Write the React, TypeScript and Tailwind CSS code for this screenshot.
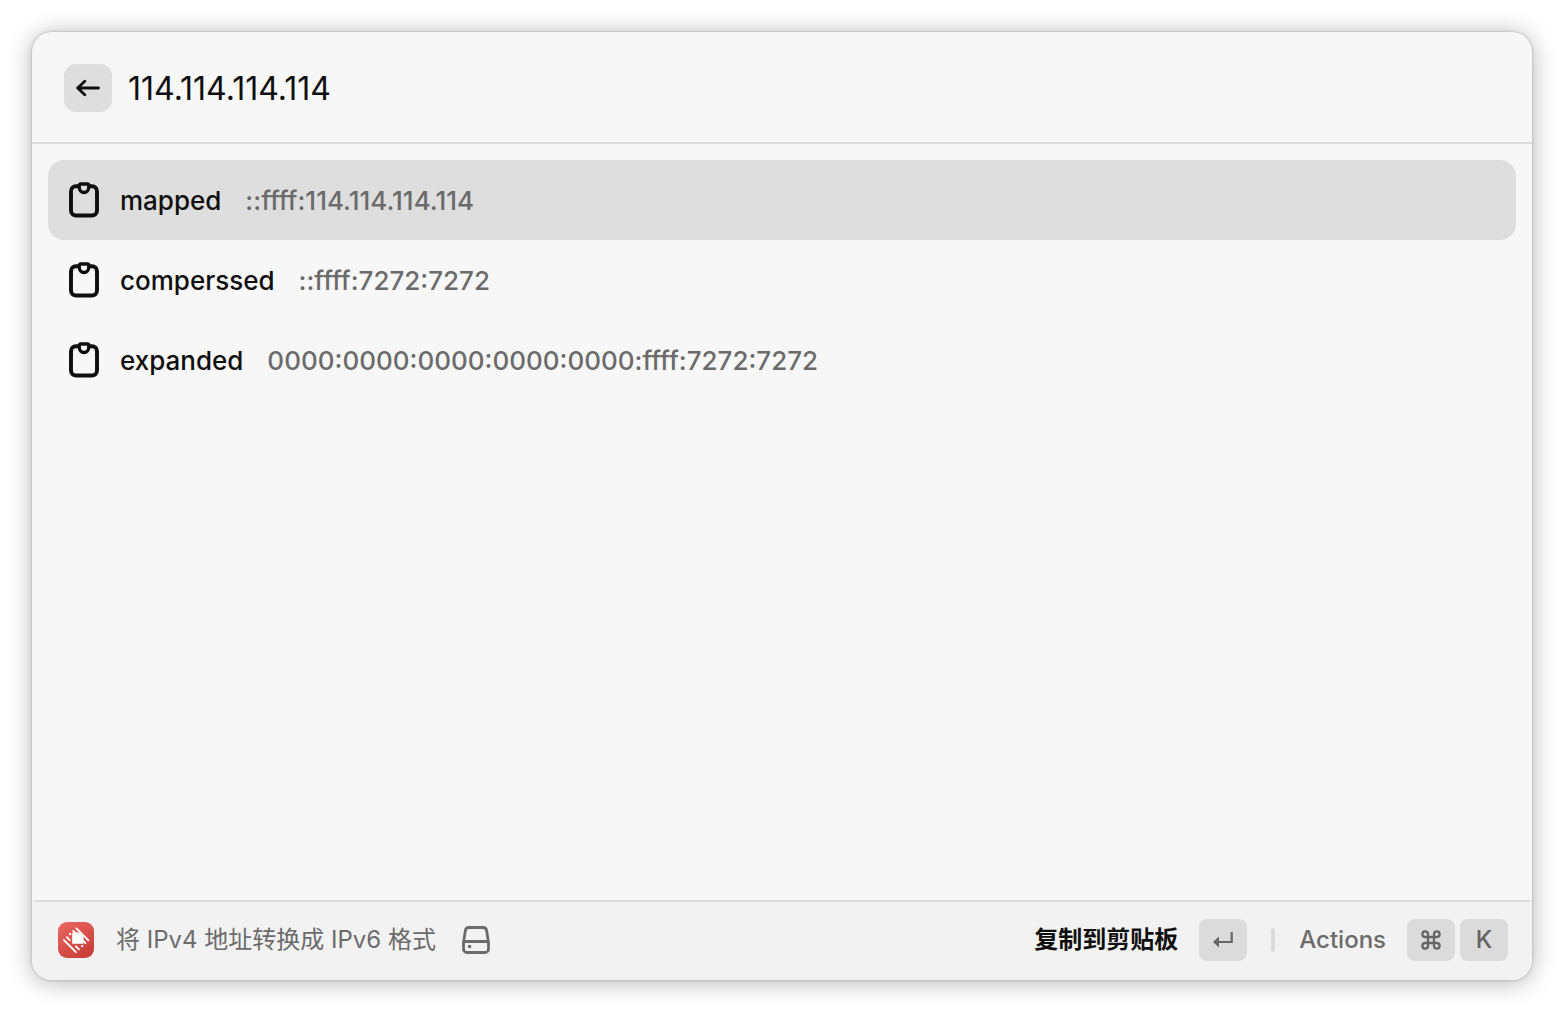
import { useState } from 'react';

const results = [
  { title: 'mapped', value: '::ffff:114.114.114.114' },
  { title: 'comperssed', value: '::ffff:7272:7272' },
  { title: 'expanded', value: '0000:0000:0000:0000:0000:ffff:7272:7272' },
];

function ArrowLeftIcon() {
  return (
    <svg width="24" height="24" viewBox="0 0 24 24" fill="none" stroke="currentColor" strokeWidth="2.9" strokeLinecap="round" strokeLinejoin="round" aria-hidden="true">
      <path d="M22.5 12H1.7M8.8 5.2L1.7 12l7.1 6.8" />
    </svg>
  );
}

function ClipboardIcon() {
  return (
    <svg width="32" height="36" viewBox="0 0 32 36" fill="none" stroke="currentColor" strokeWidth="3.9" strokeLinejoin="round" aria-hidden="true">
      <path d="M11 4.200H8A5 5 0 0 0 3 9.200V28.500A5 5 0 0 0 8 33.500H24A5 5 0 0 0 29 28.500V9.200A5 5 0 0 0 24 4.200H21" />
      <path d="M12.500 2H19.500A1.200 1.200 0 0 1 20.700 3.200V5.800A4.700 4.700 0 0 1 11.300 5.800V3.200A1.200 1.200 0 0 1 12.500 2Z" strokeWidth="3.300" />
    </svg>
  );
}

function ExtensionLogo() {
  return (
    <svg width="36" height="36" viewBox="0 0 36 36" fill="none" aria-hidden="true">
      <defs>
        <linearGradient id="logo-bg" x1="6" y1="0" x2="30" y2="36" gradientUnits="userSpaceOnUse">
          <stop stopColor="#e8655f" />
          <stop offset="1" stopColor="#c93b37" />
        </linearGradient>
      </defs>
      <rect width="36" height="36" rx="9" fill="url(#logo-bg)" />
      <path d="M14.200 10.500H21.500L25.500 14.500V21.800H14.200Z" fill="#fff" />
      <g stroke="#fff" strokeWidth="1.900" strokeLinecap="round">
        <path d="M18.400 6.300L30.400 18.300M5.900 18.200L17.900 30.200M15.300 8.900L18 11.600M24.800 18.400L27.500 21.100M8.800 15.200L11.800 18.200M17.900 24.300L20.900 27.300" />
        <path d="M12.100 12L12.200 12.100M24.100 24L24.200 24.100" strokeWidth="2.200" />
      </g>
    </svg>
  );
}

function DriveIcon() {
  return (
    <svg width="28" height="28" viewBox="0 0 28 28" fill="none" stroke="currentColor" strokeWidth="2.800" strokeLinecap="round" strokeLinejoin="round" aria-hidden="true">
      <path d="M1.500 16.500L3.400 4.500A3.600 3.600 0 0 1 7 1.500H21A3.600 3.600 0 0 1 24.600 4.500L26.500 16.500V22.900A3.600 3.600 0 0 1 22.900 26.500H5.100A3.600 3.600 0 0 1 1.500 22.900ZM1.800 15.500H26.200" />
      <circle cx="7.600" cy="20.500" r="1.800" fill="currentColor" stroke="none" />
    </svg>
  );
}

function ReturnIcon() {
  return (
    <svg width="20" height="16" viewBox="0 0 20 16" fill="none" aria-hidden="true">
      <path d="M18.700 0V10H5" stroke="currentColor" strokeWidth="2.200" />
      <path d="M0 10L6 4.500V15.500Z" fill="currentColor" />
    </svg>
  );
}

function CommandIcon() {
  return (
    <svg width="20" height="20" viewBox="0 0 20 20" fill="none" stroke="currentColor" strokeWidth="2.300" aria-hidden="true">
      <path d="M7 7H13V13H7ZM7 7H4.200A2.800 2.800 0 1 1 7 4.200ZM13 7V4.200A2.800 2.800 0 1 1 15.800 7ZM13 13H15.800A2.800 2.800 0 1 1 13 15.800ZM7 13V15.800A2.800 2.800 0 1 1 4.200 13Z" />
    </svg>
  );
}

const keyClass = 'flex h-[42px] w-12 items-center justify-center rounded-lg bg-[#dbdbdb] text-[#656565]';

export default function App() {
  const [query, setQuery] = useState('114.114.114.114');
  const [selected, setSelected] = useState(0);

  return (
    <div className="flex min-h-screen bg-white p-8 font-['Inter','Noto_Sans_CJK_SC',sans-serif] text-[#0f0f0f]">
      <main className="flex flex-1 flex-col overflow-hidden rounded-[20px] bg-[#f7f7f7] shadow-[0_0_3px_rgba(0,0,0,0.25),0_2px_24px_rgba(0,0,0,0.3)]">
        <header className="flex items-center gap-4 border-b-2 border-[#dedede] px-8 pt-8 pb-[30px]">
          <button type="button" aria-label="Back" className="flex size-12 items-center justify-center rounded-xl bg-[#dedede]">
            <ArrowLeftIcon />
          </button>
          <input
            aria-label="IPv4"
            value={query}
            onChange={(e) => setQuery(e.target.value)}
            className="h-12 min-w-0 flex-1 bg-transparent pt-0.5 text-[32px] outline-none"
          />
        </header>

        <ul className="flex-1 p-4">
          {results.map((r, i) => (
            <li key={r.title}>
              <button
                type="button"
                onClick={() => setSelected(i)}
                className={`flex h-20 w-full items-center rounded-2xl px-5 text-left text-[26px] font-medium ${i === selected ? 'bg-[#dedede]' : ''}`}
              >
                <ClipboardIcon />
                <span className="ml-5">{r.title}</span>
                <span className="ml-6 text-[#6b6b6b]">{r.value}</span>
              </button>
            </li>
          ))}
        </ul>

        <footer className="bg-[#f2f2f2] text-2xl text-[#6b6b6b]">
          <div className="mx-0.5 flex h-20 items-center border-t-2 border-[#dbdbdb] pr-[22px] pb-0.5 pl-6">
            <ExtensionLogo />
            <span className="ml-[22px]">将 IPv4 地址转换成 IPv6 格式</span>
            <span className="ml-[26px]">
              <DriveIcon />
            </span>
            <button type="button" className="ml-auto flex items-center gap-[21px] font-bold text-[#0f0f0f]">
              复制到剪贴板
              <kbd className={keyClass}>
                <ReturnIcon />
              </kbd>
            </button>
            <span className="mx-6 h-6 w-1 shrink-0 rounded-full bg-[#dbdbdb]" />
            <button type="button" className="flex items-center font-medium">
              Actions
              <kbd className={`${keyClass} ml-[21px]`}>
                <CommandIcon />
              </kbd>
              <kbd className={`${keyClass} ml-[5px] font-['Inter']`}>K</kbd>
            </button>
          </div>
        </footer>
      </main>
    </div>
  );
}
